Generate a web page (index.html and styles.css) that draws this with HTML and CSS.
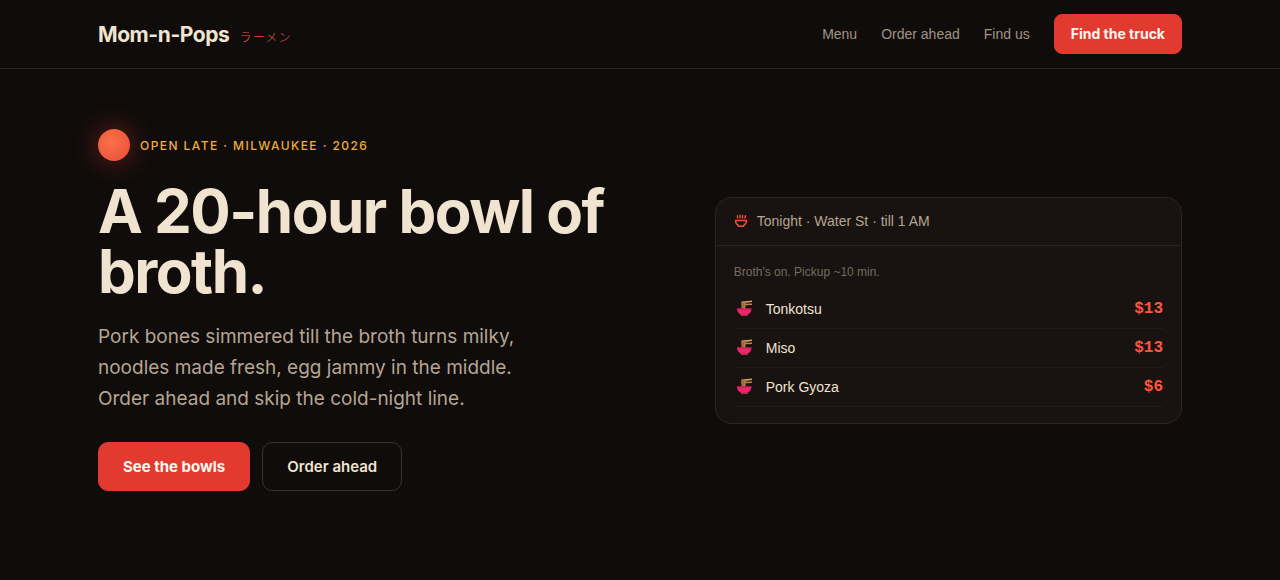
FILE: index.html
```html
<!DOCTYPE html>
<html lang="en">
<head>
  <meta charset="UTF-8">
  <meta name="viewport" content="width=device-width, initial-scale=1.0">
  <title>Mom-n-Pops Ramen</title>
  <link rel="stylesheet" href="styles.css">
</head>
<body>

  <!-- shared bowl icon for the menu rows -->
  <svg class="sprite" aria-hidden="true">
    <symbol id="bowl" viewBox="0 0 20 20">
      <path d="M7.500 2.600 18 1.400v1.700L7.500 4.400z" fill="#d09c68"/>
      <path d="M7.500 4.800 18 4.400v1.700L7.500 6.400z" fill="#b98550"/>
      <path d="M7.500 2.800h4v7h-4z" fill="#b07a48"/>
      <path d="M9 4v6" stroke="#80562f" stroke-width=".7"/>
      <path d="M3 9.400h14.500c0 3-1.400 4.800-3.600 6l-.7 1.600H7.300l-.7-1.600C4.400 14.200 3 12.400 3 9.400z" fill="#ec2668"/>
      <path d="M3 9.400h14.500l-.2 1.200H3.200z" fill="#c91b5b"/>
      <path d="M6.600 15.400h7.300l-.7 1.600H7.300z" fill="#b9265c"/>
    </symbol>
  </svg>

  <header class="site-header">
    <div class="wrap header-inner">
      <a class="brand" href="#">Mom-n-Pops <span class="brand-jp" lang="ja">ラーメン</span></a>
      <nav class="nav">
        <a href="#menu">Menu</a>
        <a href="#order">Order ahead</a>
        <a href="#find">Find us</a>
        <a class="btn btn-small btn-primary" href="#find">Find the truck</a>
      </nav>
    </div>
  </header>

  <main class="wrap hero">
    <div class="hero-copy">
      <p class="eyebrow"><span class="sun"></span>Open late · Milwaukee · 2026</p>
      <h1>A 20-hour bowl of broth.</h1>
      <p class="lede">Pork bones simmered till the broth turns milky, noodles made fresh, egg jammy in the middle. Order ahead and skip the cold-night line.</p>
      <div class="actions">
        <a class="btn btn-primary" href="#menu">See the bowls</a>
        <a class="btn btn-outline" href="#order">Order ahead</a>
      </div>
    </div>

    <section class="card">
      <h2 class="card-head">
        <svg class="steam" viewBox="0 0 14 14" fill="none" stroke="currentColor" stroke-width="1.4" stroke-linecap="round" stroke-linejoin="round" aria-hidden="true">
          <path d="M1.500 6.500h11c0 2.300-1 3.900-2.700 4.700v1H4.200v-1C2.500 10.400 1.500 8.800 1.500 6.500z"/>
          <path d="M3.500 1.800v2.200M6 1.200v2.800M8.500 1.200v2.800M11.500 1.800l-.6 2.200"/>
        </svg>
        Tonight · Water St · till 1 AM
      </h2>
      <div class="card-body">
        <p class="note">Broth's on. Pickup ~10 min.</p>
        <ul class="menu">
          <li><svg class="bowl" aria-hidden="true"><use href="#bowl"/></svg>Tonkotsu <span class="price">$13</span></li>
          <li><svg class="bowl" aria-hidden="true"><use href="#bowl"/></svg>Miso <span class="price">$13</span></li>
          <li><svg class="bowl" aria-hidden="true"><use href="#bowl"/></svg>Pork Gyoza <span class="price">$6</span></li>
        </ul>
      </div>
    </section>
  </main>

</body>
</html>
```

FILE: styles.css
```css
:root {
  --bg: #0f0c0b;
  --card: #181210;
  --cream: #f0e4d0;
  --muted: #b5a692;
  --red: #e23a2e;
  --line: #2a2523;
  --display: Inter, sans-serif;
}

* {
  box-sizing: border-box;
}

body {
  margin: 0;
  background: var(--bg);
  color: var(--cream);
  font-family: "Liberation Sans", "Noto Sans CJK JP", sans-serif;
  font-size: 14px;
}

h1, h2, p, ul {
  margin: 0;
  padding: 0;
}

a {
  color: inherit;
  text-decoration: none;
}

.sprite {
  display: none;
}

.wrap {
  max-width: 1132px;
  margin: 0 auto;
  padding: 0 24px;
}

/* header */
.site-header {
  border-bottom: 1px solid var(--line);
}

.header-inner {
  display: flex;
  align-items: center;
  justify-content: space-between;
  min-height: 68px;
}

.brand {
  display: flex;
  align-items: baseline;
  gap: 10px;
  font-family: var(--display);
  font-size: 21px;
  font-weight: 700;
  letter-spacing: -0.02em;
}

.brand-jp {
  font-family: "Noto Sans CJK JP", sans-serif;
  font-size: 12px;
  font-weight: 300;
  line-height: 16px;
  letter-spacing: 0.1em;
  color: #f0503c;
}

.nav {
  display: flex;
  align-items: center;
  gap: 24px;
  color: #a09383;
}

/* buttons */
.btn {
  display: inline-block;
  padding: 12px 24px;
  border: 1px solid transparent;
  border-radius: 10px;
  font-family: var(--display);
  font-size: 15px;
  font-weight: 600;
  line-height: 23px;
}

.btn-primary {
  background: var(--red);
  border-color: var(--red);
  color: #fff8f0;
  font-weight: 700;
}

.btn-outline {
  border-color: #383230;
}

.btn-small {
  padding: 8px 16px;
  border-radius: 8px;
  font-size: 14px;
  line-height: 22px;
}

/* hero */
.hero {
  display: grid;
  grid-template-columns: 1.2fr 1fr;
  gap: 56px;
  align-items: center;
  padding-top: 60px;
  padding-bottom: 80px;
}

.eyebrow {
  display: flex;
  align-items: center;
  gap: 10px;
  margin-bottom: 20px;
  color: #f0ad38;
  font-family: var(--display);
  font-size: 12px;
  font-weight: 500;
  letter-spacing: 0.12em;
  text-transform: uppercase;
}

.sun {
  width: 32px;
  height: 32px;
  border-radius: 50%;
  background: radial-gradient(circle at 40% 40%, #fb7149, #e94c36);
  box-shadow: 0 0 28px rgba(226, 58, 46, 0.5);
}

h1 {
  font-family: var(--display);
  font-size: 60px;
  font-weight: 700;
  line-height: 60px;
  letter-spacing: -0.025em;
}

.lede {
  max-width: 460px;
  margin: 20px 0 28px;
  color: var(--muted);
  font-family: var(--display);
  font-size: 19px;
  line-height: 31px;
}

.actions {
  display: flex;
  gap: 12px;
}

/* tonight card */
.card {
  background: var(--card);
  border: 1px solid var(--line);
  border-radius: 16px;
}

.card-head {
  display: flex;
  align-items: center;
  gap: 9px;
  padding: 12px 18px;
  border-bottom: 1px solid var(--line);
  color: var(--muted);
  font-size: 14px;
  font-weight: 400;
  line-height: 23px;
}

.steam {
  width: 14px;
  height: 14px;
  color: #f0503c;
}

.card-body {
  padding: 16px 18px;
}

.note {
  margin-bottom: 8px;
  color: #776b60;
  font-size: 12px;
  line-height: 20px;
}

.menu {
  list-style: none;
}

.menu li {
  display: flex;
  align-items: center;
  gap: 12px;
  border-bottom: 1px solid #211b19;
  line-height: 38px;
}

.bowl {
  width: 20px;
  height: 20px;
}

.price {
  margin-left: auto;
  color: #ff553d;
  font-family: "Liberation Mono", monospace;
  font-size: 16px;
  font-weight: 700;
}

@media (max-width: 800px) {
  .hero {
    grid-template-columns: 1fr;
  }

  .header-inner {
    flex-wrap: wrap;
    gap: 12px;
    padding-top: 12px;
    padding-bottom: 12px;
  }
}
```
